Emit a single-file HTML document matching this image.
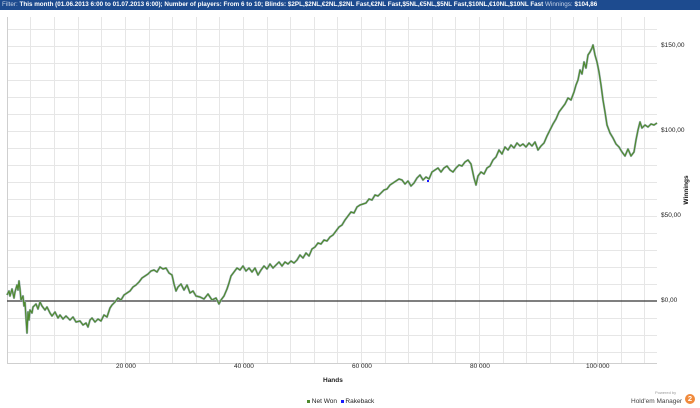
<!DOCTYPE html>
<html><head><style>
body{margin:0;width:700px;height:408px;background:#fff;font-family:"Liberation Sans",sans-serif;overflow:hidden;position:relative}
.hdr{position:absolute;left:0;top:0;width:700px;height:10px;background:#1d4b8f;color:#fff;font-size:6.3px;line-height:10px;white-space:nowrap;padding-left:2px}
.t{position:absolute;font-size:6.5px;color:#222;white-space:nowrap}
</style></head><body>
<div class="hdr"><span style="color:#c8d4e8">Filter:</span> <b>This month (01.06.2013 6:00 to 01.07.2013 6:00); Number of players: From 6 to 10; Blinds: $2PL,$2NL,€2NL,$2NL Fast,€2NL Fast,$5NL,€5NL,$5NL Fast,$10NL,€10NL,$10NL Fast</b> <span style="color:#c8d4e8">Winnings:</span> <b>$104,86</b></div>
<svg width="700" height="408" style="position:absolute;left:0;top:0">
<defs>
<polyline id="p" points="7,295 9,291 10,296 12,289 14,298 15,292 17,285 18,290 19,281 20,289 21,300 23,296 24,306 25,302 26,318 27,333 28,312 29,320 30,310 32,313 33,307 36,304 38,309 40,302 42,306 45,310 47,307 50,313 52,316 55,312 58,318 60,315 63,319 66,316 70,320 73,317 76,322 80,321 83,325 86,323 88,327 90,320 92,318 95,322 98,319 101,321 104,315 107,317 110,308 112,305 115,302 118,298 121,300 124,295 127,293 130,291 133,287 136,285 139,282 142,278 145,276 148,274 151,271 154,270 157,272 160,267 163,269 166,268 169,273 172,275 174,284 176,291 178,287 181,284 184,290 187,285 190,293 193,291 196,296 200,297 204,299 208,294 212,300 216,298 219,304 221,300 224,296 227,289 229,283 231,276 234,272 237,268 240,270 243,266 246,271 249,268 252,272 255,268 258,275 261,270 264,266 267,269 270,264 273,268 276,265 279,262 282,266 285,262 288,264 291,261 294,263 297,260 300,255 303,258 306,253 309,256 312,249 315,247 318,243 321,244 324,240 327,241 330,237 333,235 336,231 339,227 342,225 345,220 348,216 351,212 354,213 357,207 360,205 363,204 366,203 369,199 372,200 375,195 378,196 381,193 384,190 387,189 390,185 393,183 396,181 399,179 402,180 405,184 408,181 411,186 414,183 417,178 420,175 423,180 426,177 429,179 432,172 435,170 438,168 441,172 444,168 447,166 450,170 453,172 456,168 459,165 462,166 465,162 468,160 471,164 474,178 476,185 478,176 481,172 484,174 487,168 490,166 493,160 496,157 499,150 502,154 505,147 508,150 511,145 514,148 517,143 520,146 523,144 526,147 529,143 532,146 535,142 538,150 541,146 544,143 547,136 550,130 553,124 556,119 559,112 562,108 565,104 568,98 571,100 574,92 576,85 578,80 580,70 582,74 584,62 586,68 588,55 590,52 592,48 593,45 595,55 597,62 599,72 601,85 603,100 605,112 607,125 610,133 613,138 616,144 619,147 622,152 625,156 628,149 631,156 634,152 636,140 638,130 640,122 642,128 645,125 648,127 651,124 654,125 657,123"/>
</defs>
<g stroke="#e6e6e6" stroke-width="1">
<path d="M30.5 17V364M54.5 17V364M78.5 17V364M101.5 17V364M125.5 17V364M149.5 17V364M172.5 17V364M196.5 17V364M219.5 17V364M243.5 17V364M267.5 17V364M290.5 17V364M314.5 17V364M337.5 17V364M361.5 17V364M385.5 17V364M408.5 17V364M432.5 17V364M455.5 17V364M479.5 17V364M503.5 17V364M526.5 17V364M550.5 17V364M573.5 17V364M597.5 17V364M621.5 17V364M644.5 17V364"/>
<path d="M7 29.5H657M7 46.5H657M7 63.5H657M7 80.5H657M7 97.5H657M7 114.5H657M7 131.5H657M7 148.5H657M7 165.5H657M7 182.5H657M7 199.5H657M7 216.5H657M7 233.5H657M7 250.5H657M7 267.5H657M7 284.5H657M7 318.5H657M7 335.5H657M7 352.5H657"/>
</g>
<path d="M7.5 17V363.5H657" fill="none" stroke="#cfcfcf"/>
<g stroke="#d0d0d0"><path d="M125.5 364v3M243.5 364v3M361.5 364v3M479.5 364v3M597.5 364v3"/></g>
<path d="M7 301H657" stroke="#333" stroke-width="1.2"/>
<use href="#p" fill="none" stroke-linejoin="round" stroke="#9fb0bd" stroke-width="2.2"/>
<use href="#p" fill="none" stroke-linejoin="round" stroke="#4f8a2f" stroke-width="1.2"/>
<rect x="427" y="180" width="2" height="2" fill="#1a1aff"/>
<text x="688" y="190" transform="rotate(-90 688 190)" font-size="6.5" font-weight="bold" font-family="Liberation Sans" text-anchor="middle" fill="#111">Winnings</text>
</svg>
<div class="t" style="left:661px;top:42px">$150,00</div>
<div class="t" style="left:661px;top:127px">$100,00</div>
<div class="t" style="left:661px;top:212px">$50,00</div>
<div class="t" style="left:661px;top:297px">$0,00</div>
<div class="t" style="left:116px;top:363px">20 000</div>
<div class="t" style="left:234px;top:363px">40 000</div>
<div class="t" style="left:352px;top:363px">60 000</div>
<div class="t" style="left:470px;top:363px">80 000</div>
<div class="t" style="left:586px;top:363px">100 000</div>
<div class="t" style="left:323px;top:377px;font-weight:bold">Hands</div>
<div class="t" style="left:307px;top:398px"><span style="display:inline-block;width:3px;height:3px;background:#4f8a2f;vertical-align:middle"></span> Net Won &nbsp;<span style="display:inline-block;width:3px;height:3px;background:#1a1aff;vertical-align:middle"></span> Rakeback</div>
<div class="t" style="left:655px;top:390px;font-size:4px;color:#999">Powered by</div>
<div class="t" style="left:631px;top:398px;color:#444">Hold'em Manager</div>
<div style="position:absolute;left:685px;top:394px;width:10px;height:10px;border-radius:50%;background:#f08a3c;color:#fff;font-size:7.5px;font-weight:bold;text-align:center;line-height:10px">2</div>
</body></html>
